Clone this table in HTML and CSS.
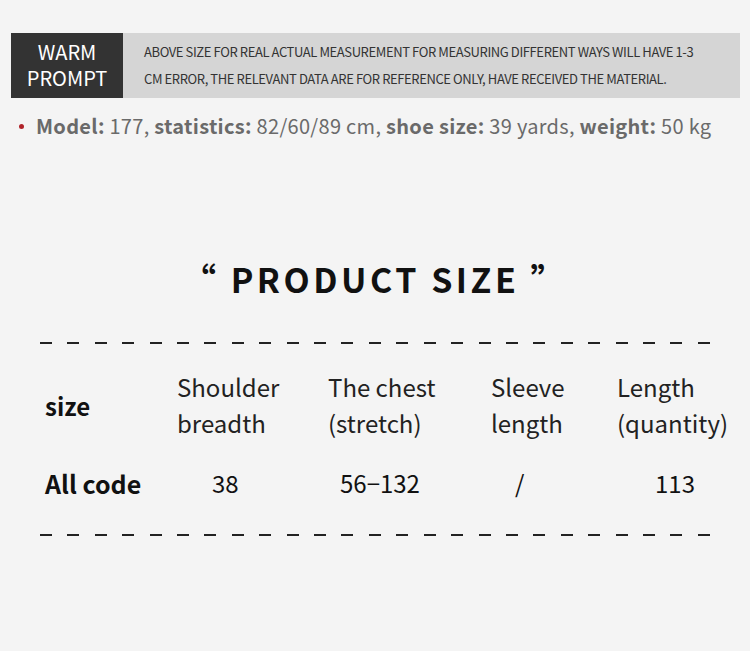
FILE: index.html
```html
<!DOCTYPE html>
<html>
<head>
<meta charset="utf-8">
<link rel="stylesheet" href="styles.css">
</head>
<body>
<div class="page">
  <div class="banner">
    <div class="banner-label"><div>WARM</div><div>PROMPT</div></div>
    <div class="banner-text">ABOVE SIZE FOR REAL ACTUAL MEASUREMENT FOR MEASURING DIFFERENT WAYS WILL HAVE 1-3<br>CM ERROR, THE RELEVANT DATA ARE FOR REFERENCE ONLY, HAVE RECEIVED THE MATERIAL.</div>
  </div>
  <div class="model">
    <span class="dot"></span>
    <span><b>Model:</b> 177, <b>statistics:</b> 82/60/89 cm, <b>shoe size:</b> 39 yards, <b>weight:</b> 50 kg</span>
  </div>
  <h1 class="title">“ PRODUCT SIZE ”</h1>
  <div class="dashes top">
    <i></i><i></i><i></i><i></i><i></i><i></i><i></i><i></i><i></i><i></i><i></i><i></i><i></i><i></i><i></i><i></i><i></i><i></i><i></i><i></i><i></i><i></i><i></i><i></i><i></i>
  </div>
  <div class="table">
    <div class="cell head-key">size</div>
    <div class="cell head">Shoulder<br>breadth</div>
    <div class="cell head">The chest<br>(stretch)</div>
    <div class="cell head">Sleeve<br>length</div>
    <div class="cell head">Length<br>(quantity)</div>
    <div class="cell row-key">All code</div>
    <div class="cell val v1">38</div>
    <div class="cell val v2">56−132</div>
    <div class="cell val v3">/</div>
    <div class="cell val v4">113</div>
  </div>
  <div class="dashes bottom">
    <i></i><i></i><i></i><i></i><i></i><i></i><i></i><i></i><i></i><i></i><i></i><i></i><i></i><i></i><i></i><i></i><i></i><i></i><i></i><i></i><i></i><i></i><i></i><i></i><i></i>
  </div>
</div>
</body>
</html>
```

FILE: styles.css
```css
html, body {
  margin: 0;
  padding: 0;
  background: #f4f4f4;
}
body {
  width: 750px;
  height: 651px;
  overflow: hidden;
  font-family: "Noto Sans CJK SC", "Noto Sans", sans-serif;
  color: #111;
}
.page {
  padding-top: 33px;
}
.banner {
  display: flex;
  margin-left: 11px;
  width: 729px;
  height: 65px;
  background: #d5d5d5;
}
.banner-label {
  width: 112px;
  background: #333333;
  color: #fff;
  font-size: 20px;
  line-height: 26px;
  text-align: center;
  padding-top: 6px;
  box-sizing: border-box;
}
.banner-text {
  padding-left: 21px;
  padding-top: 5px;
  font-size: 13px;
  line-height: 27px;
  color: #333;
  letter-spacing: -0.4px;
}
.model {
  display: flex;
  align-items: center;
  margin-top: 14px;
  margin-left: 19px;
  font-size: 20px;
  line-height: 28px;
  color: #6a6a6a;
  letter-spacing: 0.3px;
}
.model b {
  font-weight: 700;
}
.dot {
  width: 5px;
  height: 5px;
  border-radius: 50%;
  background: #b0232a;
  margin-right: 12px;
}
.title {
  margin: 117px 0 0;
  text-align: center;
  font-size: 34px;
  line-height: 44px;
  font-weight: 700;
  letter-spacing: 3.5px;
  color: #111;
}
.dashes {
  display: flex;
  justify-content: space-between;
  width: 670px;
  margin-left: 40px;
}
.dashes i {
  display: block;
  width: 12px;
  height: 2px;
  background: #222;
}
.dashes.top {
  margin-top: 41px;
}
.table {
  display: grid;
  grid-template-columns: 132px 151px 163px 126px 1fr;
  margin-left: 45px;
  margin-top: 25px;
}
.head {
  font-size: 24px;
  line-height: 36px;
  color: #222;
}
.head-key, .row-key {
  font-size: 24px;
  font-weight: 700;
  color: #111;
  align-self: center;
}
.row-key {
  font-size: 25px;
  line-height: 30px;
  margin-top: 27px;
}
.val {
  margin-top: 27px;
  font-size: 24px;
  line-height: 30px;
  color: #111;
}
.v1 { padding-left: 35px; }
.v2 { padding-left: 12px; }
.v3 { padding-left: 24px; }
.v4 { padding-left: 38px; }
.dashes.bottom {
  margin-top: 36px;
}
```
